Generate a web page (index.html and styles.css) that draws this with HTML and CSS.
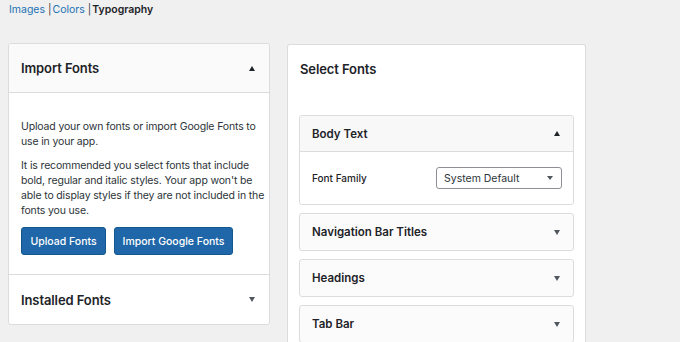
FILE: index.html
```html
<!DOCTYPE html>
<html>
<head>
<meta charset="utf-8">
<link rel="stylesheet" href="styles.css">
</head>
<body>
<nav class="tabs">
  <a class="tab-link" href="#">Images</a>
  <span class="sep">|</span><a class="tab-link" href="#">Colors</a>
  <span class="sep">|</span><span class="tab-current">Typography</span>
</nav>
<main class="columns">
  <section class="panel left">
    <div class="panel-head">
      <h2 class="panel-title">Import Fonts</h2>
      <span class="tri up"></span>
    </div>
    <div class="panel-body">
      <p class="txt">Upload your own fonts or import Google Fonts to use in your app.</p>
      <p class="txt">It is recommended you select fonts that include bold, regular and italic styles. Your app won't be able to display styles if they are not included in the fonts you use.</p>
      <div class="btn-row">
        <button class="btn btn-upload">Upload Fonts</button>
        <button class="btn btn-import">Import Google Fonts</button>
      </div>
    </div>
    <div class="panel-foot">
      <h2 class="panel-title">Installed Fonts</h2>
      <span class="tri down"></span>
    </div>
  </section>
  <section class="panel right">
    <h2 class="panel-title select-title">Select Fonts</h2>
    <div class="acc open">
      <div class="acc-head">
        <span class="acc-title">Body Text</span>
        <span class="tri up"></span>
      </div>
      <div class="acc-body">
        <span class="field-label">Font Family</span>
        <div class="select">
          <span>System Default</span>
          <span class="tri down small"></span>
        </div>
      </div>
    </div>
    <div class="acc">
      <div class="acc-head">
        <span class="acc-title">Navigation Bar Titles</span>
        <span class="tri down"></span>
      </div>
    </div>
    <div class="acc">
      <div class="acc-head">
        <span class="acc-title">Headings</span>
        <span class="tri down"></span>
      </div>
    </div>
    <div class="acc">
      <div class="acc-head">
        <span class="acc-title">Tab Bar</span>
        <span class="tri down"></span>
      </div>
    </div>
  </section>
</main>
</body>
</html>
```

FILE: styles.css
```css
* { box-sizing: border-box; }
html, body { height: 100%; }
body {
  margin: 0;
  background: #f0f0f1;
  font-family: Inter, "Noto Sans", "Liberation Sans", sans-serif;
  color: #1d2327;
  overflow: hidden;
}
.tabs {
  padding: 3px 0 0 9px;
  font-size: 10.5px;
  line-height: 14px;
  height: 43px;
}
.tab-link { color: #2271b1; text-decoration: none; }
.sep { color: #3c434a; margin: 0 1px 0 0; }
.tab-current { font-weight: 600; color: #1d2327; }
.columns {
  display: flex;
  align-items: flex-start;
  gap: 17px;
  padding-left: 8px;
}
.panel {
  background: #fff;
  border: 1px solid #dcdcde;
  border-radius: 3px;
}
.left { width: 262px; }
.right {
  width: 299px;
  margin-top: 1px;
  padding: 0 11px 0 11px;
  height: 300px;
  border-bottom: none;
}
.panel-head, .panel-foot {
  display: flex;
  align-items: center;
  justify-content: space-between;
  padding: 0 14px 0 12px;
  height: 49px;
}
.panel-head {
  background: #fafafa;
  border-bottom: 1px solid #dcdcde;
  border-radius: 3px 3px 0 0;
}
.panel-foot { border-top: 1px solid #dcdcde; height: 50px; }
.panel-title {
  margin: 0;
  font-size: 13px;
  font-weight: 600;
  letter-spacing: -0.1px;
}
.panel-body { padding: 26px 2px 19px 12px; }
.txt {
  margin: 0 0 9px;
  font-size: 10.5px;
  line-height: 15px;
  letter-spacing: -0.15px;
  color: #2c3338;
}
.btn-row { display: flex; gap: 8px; margin-top: 9px; }
.btn {
  height: 28px;
  background: #1f67a8;
  color: #fff;
  border: 1px solid #14578f;
  border-radius: 3px;
  font-family: inherit;
  font-size: 10.5px;
  font-weight: 500;
  padding: 0;
}
.btn-upload { width: 85px; }
.btn-import { width: 119px; }
.tri {
  width: 0; height: 0;
  border-left: 3.5px solid transparent;
  border-right: 3.5px solid transparent;
}
.tri.up { border-bottom: 5px solid #1d2327; }
.tri.down { border-top: 5px solid #50575e; }
.tri.small { border-left-width: 3px; border-right-width: 3px; border-top-width: 4px; }
.select-title { padding: 16px 0 0 1px; height: 70px; }
.acc {
  border: 1px solid #dcdcde;
  border-radius: 3px;
  margin-bottom: 8px;
  background: #fcfbfc;
}
.acc-head {
  height: 36px;
  display: flex;
  align-items: center;
  justify-content: space-between;
  padding: 0 13px 0 12px;
}
.acc.open .acc-head { border-bottom: 1px solid #dcdcde; background: #f9f8f9; border-radius: 3px 3px 0 0; }
.acc-title { font-size: 11.5px; font-weight: 600; }
.acc-body {
  background: #fff;
  height: 52px;
  display: flex;
  align-items: center;
  justify-content: space-between;
  padding: 0 11px 0 12px;
  border-radius: 0 0 3px 3px;
}
.field-label { font-size: 10px; font-weight: 500; color: #1d2327; }
.select {
  width: 126px;
  height: 22px;
  border: 1px solid #8c8f94;
  border-radius: 3px;
  display: flex;
  align-items: center;
  justify-content: space-between;
  padding: 0 8px 0 7px;
  font-size: 10.5px;
  color: #2c3338;
  background: #fff;
}
```
